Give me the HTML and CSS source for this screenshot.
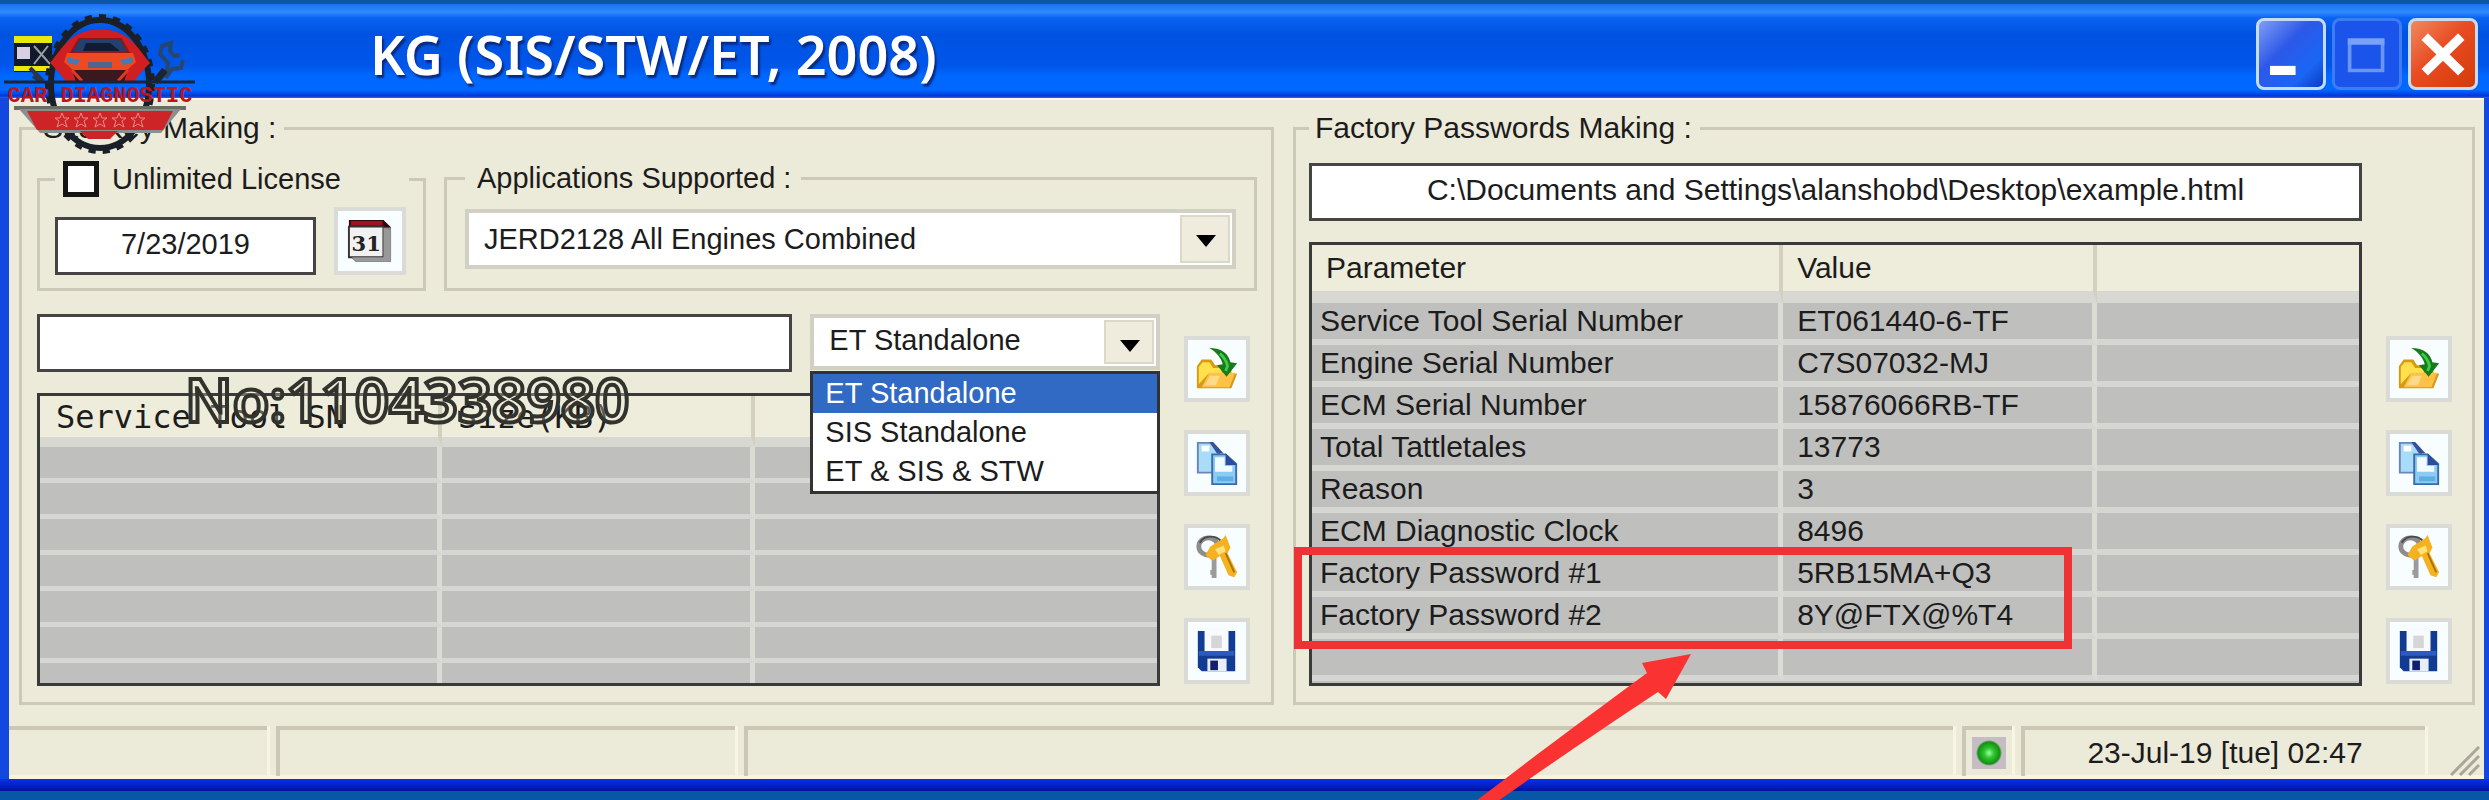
FILE: index.html
```html
<!doctype html>
<html lang="en">
<head>
	<meta charset="utf-8">
	<title>KG (SIS/STW/ET, 2008)</title>
	<link rel="stylesheet" href="styles.css">
</head>
<body>
	<!-- shared icons for the two tool columns -->
	<svg class="sprite" width="0" height="0" aria-hidden="true">
		<symbol id="i-open" viewBox="0 0 48 48">
			<path d="M3 44V21l5-7h10l4 6h8l9 3v5l6 1-6 15z" fill="#d99a12"/>
			<path d="M5 40V22l4-5h7l4 6h9v6H15z" fill="#ffe14d"/>
			<path d="M8 43l8-15h27l-6 15z" fill="#ffc247"/>
			<path d="M11 41l6-10h10l-4 10z" fill="#ffd98a"/>
			<path d="M16 2c13 0 20 6 22 15l7 1-11 14-10-12 6-1C28 12 24 7 16 2z" fill="#177a1c"/>
			<path d="M27 8c5 4 7 8 8 13l-2 5" fill="none" stroke="#3ecb45" stroke-width="3"/>
		</symbol>
		<symbol id="i-copy" viewBox="0 0 48 48">
			<path d="M4 3h13l9 9v22H4z" fill="#a9dcf8" stroke="#6a86b5" stroke-width="2"/>
			<path d="M8 6h8v6h-8z" fill="#fff"/>
			<path d="M16 2h4l11 12h-7z" fill="#34529c"/>
			<path d="M19 15h14l11 10v21H19z" fill="#8ccbf2" stroke="#3a6cab" stroke-width="2"/>
			<path d="M22 18h10v9h8v6H22z" fill="#f2fbff"/>
			<path d="M33 14l12 12H33z" fill="#2d4b9c"/>
			<path d="M24 38h17v5H24z" fill="#5faee6"/>
		</symbol>
		<symbol id="i-keys" viewBox="0 0 48 48">
			<ellipse cx="15" cy="13" rx="10" ry="9" fill="none" stroke="#8d8d8d" stroke-width="5"/>
			<path d="M6 9c5-8 16-8 22-2" fill="none" stroke="#4a4a4a" stroke-width="2"/>
			<path d="M21 24v22M17 40h4" stroke="#9b9b9b" stroke-width="5" fill="none"/>
			<path d="M17 13l13-8 3-4 5 13-3 6 10 20-3 5-6-2-9-20-8 5-7-6z" fill="#f5b120"/>
			<path d="M22 16l9-4 2 6-7 4z" fill="#ffe27c"/>
			<path d="M33 20l9 20" stroke="#a87408" stroke-width="2"/>
		</symbol>
		<symbol id="i-save" viewBox="0 0 48 48">
			<path d="M4 3h39v42H8l-4-4z" fill="#123c94"/>
			<path d="M11 0h25v24H11z" fill="#f7fbff"/>
			<path d="M18 8h11v13H18z" fill="#d6d6d6"/>
			<path d="M14 32h20v13H14z" fill="#e9eefb"/>
			<path d="M17 34h8v10h-8z" fill="#10206e"/>
			<path d="M5 24h37v5H5z" fill="#2a5cc0"/>
		</symbol>
	</svg>

	<main class="window">
		<!-- title bar -->
		<header class="titlebar">
			<svg class="app-icon" viewBox="0 0 38 36" aria-hidden="true">
				<path d="M0 0h38v36H0z" fill="#111a2c"/>
				<path d="M0 0h38v7H0zM0 30h38v5H0z" fill="#e8e90c"/>
				<path d="M3 11h13v12H3z" fill="#d9cfe4"/>
				<path d="M20 10l16 18M34 10L20 28" stroke="#9aa0a0" stroke-width="2"/>
			</svg>
			<svg class="logo" viewBox="0 0 200 160" role="img" aria-label="Car Diagnostic">
				<ellipse cx="100" cy="84" rx="49" ry="64" fill="none" stroke="#1b1f27" stroke-width="6"/>
				<ellipse cx="100" cy="84" rx="52" ry="67" fill="none" stroke="#1b1f27" stroke-width="6" stroke-dasharray="7 7"/>
				<path d="M50 63c12-14 20-33 50-34 30 1 38 20 50 34-8 8-12 13-16 19H66c-4-6-8-11-16-19z" fill="#cf1f22"/>
				<path d="M71 53l8-14h42l8 14z" fill="#23406f" stroke="#8e1717" stroke-width="2"/>
				<path d="M83 51l3-8h24l10 8z" fill="#101b36"/>
				<path d="M67 53h66l3 9-9 8H73l-9-8z" fill="#ee4a22"/>
				<path d="M67 57l13 3-3 5-9-2zM133 57l-13 3 3 5 9-2z" fill="#4a78b5"/>
				<path d="M88 62h24v6H88z" fill="#51658d"/>
				<path d="M72 70h56l-4 12H76z" fill="#3b1820"/>
				<path d="M72 70l10 11M128 70l-10 11" stroke="#e23a22" stroke-width="3"/>
				<path d="M30 68l13 13M33 76l8 6" stroke="#27364d" stroke-width="4"/>
				<path d="M160 79c6-5 8-9 8-16l-8-9 2-8 9-3-1 8 4 5 6-1M166 78l6-9 9-1 2-8" fill="none" stroke="#27466f" stroke-width="4"/>
				<path d="M155 82l10-12" stroke="#1b2430" stroke-width="7"/>
				<path d="M4 82h191" stroke="#16243c" stroke-width="3"/>
				<path d="M14 108h172" stroke="#6b6b66" stroke-width="4"/>
				<path d="M19 109h162l-20 24H40z" fill="#8b8f8c"/>
				<path d="M27 111h146l-10 19H37z" fill="#cd2428"/>
				<path d="M80 131h38l-8 8H88z" fill="#cd2428"/>
				<g fill="none" stroke="#ee8a86" stroke-width="1">
					<path id="star" d="M62 113l2 5h5l-4 3 2 6-5-3-5 3 2-6-4-3h5z"/>
					<use href="#star" x="19"/>
					<use href="#star" x="38"/>
					<use href="#star" x="57"/>
					<use href="#star" x="76"/>
				</g>
				<text x="100" y="102" text-anchor="middle" class="logo-text">CAR DIAGNOSTIC</text>
			</svg>
			<h1>KG (SIS/STW/ET, 2008)</h1>
			<div class="controls">
				<button type="button" class="ctl ctl-min" aria-label="Minimize">
					<svg viewBox="0 0 70 70"><path d="M12 48h28v10H12z" fill="#fff"/></svg>
				</button>
				<button type="button" class="ctl ctl-max" aria-label="Maximize" disabled>
					<svg viewBox="0 0 70 70"><path d="M16 20h36v33H16z" fill="none" stroke="#6b94f5" stroke-width="4"/><path d="M14 18h40v7H14z" fill="#7ba1f7"/></svg>
				</button>
				<button type="button" class="ctl ctl-close" aria-label="Close">
					<svg viewBox="0 0 70 70"><path d="M15 16l40 39M55 16L15 55" stroke="#fff" stroke-width="10"/></svg>
				</button>
			</div>
		</header>

		<div class="client">
			<!-- key making -->
			<fieldset class="group group-keys">
				<legend>Site Key Making :</legend>
				<div class="options">
					<fieldset class="group box-license">
						<legend>
							<input type="checkbox" id="unlimited">
							<label for="unlimited">Unlimited License</label>
						</legend>
						<input type="text" class="field date" value="7/23/2019" aria-label="Expiry date">
						<button type="button" class="tool tool-cal" aria-label="Calendar">
							<svg viewBox="0 0 48 48">
								<path d="M2 2h36l8 8v36H9l-7-7z" fill="#8a8a8a"/>
								<path d="M2 2h36l8 8H2z" fill="#30090f"/>
								<path d="M4 3h33v5H4z" fill="#a30f22"/>
								<path d="M2 9h36v32H2z" fill="#f1f1f1" stroke="#333" stroke-width="2"/>
								<path d="M38 10l7 3v32H10l-5-4h33z" fill="#999"/>
								<text x="20" y="34" text-anchor="middle" class="cal-text">31</text>
							</svg>
						</button>
					</fieldset>
					<fieldset class="group box-apps">
						<legend><label for="apps">Applications Supported :</label></legend>
						<div class="combo">
							<select id="apps"><option>JERD2128 All Engines Combined</option></select>
						</div>
					</fieldset>
				</div>
				<div class="work">
					<div class="work-main">
						<div class="query">
							<input type="text" class="field" aria-label="Service tool serial number">
							<div class="combo combo-open">
								<select aria-label="Application type">
									<option>ET Standalone</option>
									<option>SIS Standalone</option>
									<option>ET &amp; SIS &amp; STW</option>
								</select>
								<ul class="dropdown" role="listbox">
									<li class="current" role="option" aria-selected="true">ET Standalone</li>
									<li role="option">SIS Standalone</li>
									<li role="option">ET &amp; SIS &amp; STW</li>
								</ul>
							</div>
						</div>
						<div class="grid-holder">
							<div class="grid-box">
								<table class="grid grid-files">
									<thead>
										<tr><th>Service Tool SN</th><th>Size(KB)</th><th></th></tr>
									</thead>
									<tbody>
										<tr><td></td><td></td><td></td></tr>
										<tr><td></td><td></td><td></td></tr>
										<tr><td></td><td></td><td></td></tr>
										<tr><td></td><td></td><td></td></tr>
										<tr><td></td><td></td><td></td></tr>
										<tr><td></td><td></td><td></td></tr>
										<tr class="rest"><td></td><td></td><td></td></tr>
									</tbody>
								</table>
							</div>
							<span class="watermark">No:1104338980</span>
						</div>
					</div>
					<div class="tools">
						<button type="button" class="tool" aria-label="Open"><svg><use href="#i-open"/></svg></button>
						<button type="button" class="tool" aria-label="Copy"><svg><use href="#i-copy"/></svg></button>
						<button type="button" class="tool" aria-label="Make key"><svg><use href="#i-keys"/></svg></button>
						<button type="button" class="tool" aria-label="Save"><svg><use href="#i-save"/></svg></button>
					</div>
				</div>
			</fieldset>

			<!-- factory passwords -->
			<fieldset class="group group-pass">
				<legend>Factory Passwords Making :</legend>
				<div class="work">
					<div class="work-main">
						<input type="text" class="field path" value="C:\Documents and Settings\alanshobd\Desktop\example.html" aria-label="File path">
						<div class="grid-holder">
							<div class="grid-box">
								<table class="grid grid-params">
									<thead>
										<tr><th>Parameter</th><th>Value</th><th></th></tr>
									</thead>
									<tbody>
										<tr><td>Service Tool Serial Number</td><td>ET061440-6-TF</td><td></td></tr>
										<tr><td>Engine Serial Number</td><td>C7S07032-MJ</td><td></td></tr>
										<tr><td>ECM Serial Number</td><td>15876066RB-TF</td><td></td></tr>
										<tr><td>Total Tattletales</td><td>13773</td><td></td></tr>
										<tr><td>Reason</td><td>3</td><td></td></tr>
										<tr><td>ECM Diagnostic Clock</td><td>8496</td><td></td></tr>
										<tr><td>Factory Password #1</td><td>5RB15MA+Q3</td><td></td></tr>
										<tr><td>Factory Password #2</td><td>8Y@FTX@%T4</td><td></td></tr>
										<tr><td></td><td></td><td></td></tr>
									</tbody>
								</table>
							</div>
							<!-- highlight and arrow over the password rows -->
							<div class="mark"></div>
							<svg class="arrow" viewBox="0 0 216 147" aria-hidden="true">
								<path d="M215 0l-49 9 5 10C110 64 56 104 0 147h22c54-38 104-72 160-109l8 7z" fill="#fb3232"/>
							</svg>
						</div>
					</div>
					<div class="tools">
						<button type="button" class="tool" aria-label="Open file"><svg><use href="#i-open"/></svg></button>
						<button type="button" class="tool" aria-label="Copy passwords"><svg><use href="#i-copy"/></svg></button>
						<button type="button" class="tool" aria-label="Make passwords"><svg><use href="#i-keys"/></svg></button>
						<button type="button" class="tool" aria-label="Save passwords"><svg><use href="#i-save"/></svg></button>
					</div>
				</div>
			</fieldset>
		</div>

		<!-- status bar -->
		<footer class="status">
			<span></span>
			<span></span>
			<span></span>
			<span class="led"><i></i></span>
			<span class="clock">23-Jul-19 [tue] 02:47</span>
			<svg class="grip" viewBox="0 0 30 32" aria-hidden="true">
				<path d="M1 31L29 3M10 31l19-19M19 31l10-10" stroke="#aaa698" stroke-width="3"/>
			</svg>
		</footer>
	</main>
</body>
</html>
```

FILE: styles.css
```css
*{box-sizing:border-box;}
body{
	margin:0;
	background-color:#0856a6;
	color:#1c1c1c;
	font-family:"Liberation Sans",Arial,sans-serif;
	font-size:30px;
	line-height:34px;
}
input,select,button{
	margin:0;
	font-family:inherit;
	font-size:inherit;
	color:inherit;
}
.sprite{position:absolute;}
/* window frame */
.window{
	min-height:100vh;
	display:flex;
	flex-direction:column;
	padding:4px 5px 23px 9px;
	background:
		linear-gradient(#0b57a4,#0b57a4) top/100% 4px no-repeat,
		linear-gradient(#0a2ff0,#0013a0) bottom 11px left 0/100% 12px no-repeat,
		linear-gradient(#0856a6,#0856a6) bottom/100% 11px no-repeat,
		#1247e0;
}
/* title bar */
.titlebar{
	position:relative;
	height:94px;
	margin:0 -5px 0 -9px;
	padding:6px 11px 0 14px;
	display:flex;
	align-items:center;
	background:linear-gradient(#1a70ee 0,#2f8cff 8px,#0a62f2 14px,#0053e0 30px,#0056ea 62px,#0068ff 72px,#0068ff 86px,#0035d8 92px,#3a62d0 94px);
}
.titlebar h1{
	flex:1;
	margin:0 0 0 318px;
	color:#fff;
	font-family:"Noto Sans","Open Sans",sans-serif;
	font-size:54px;
	font-weight:600;
	line-height:60px;
	text-shadow:2px 3px 2px #0a2a80;
}
.app-icon{width:38px;height:36px;}
.logo{
	position:absolute;
	z-index:2;
	left:0;
	top:-4px;
	width:200px;
	height:160px;
}
.logo-text{
	font-family:"Liberation Mono",monospace;
	font-size:22px;
	font-weight:bold;
	fill:#b81722;
}
.controls{display:flex;gap:6px;}
.ctl{
	width:70px;
	height:72px;
	padding:0;
	border:3px solid #c6dcf5;
	border-radius:8px;
}
.ctl svg{display:block;width:100%;height:100%;}
.ctl-min{background:linear-gradient(135deg,#7f9df5,#2d58e8 40%,#1a66f5 75%,#0b3cc0);}
.ctl-max{background-color:#1a54ea;border-color:#3d7cf5;}
.ctl-close{background:linear-gradient(135deg,#f08a60,#e84c22 45%,#d43a08);}
/* client area */
.client{
	flex:1;
	display:grid;
	grid-template-columns:1255fr 1182fr;
	gap:19px;
	padding:11px 9px 21px 10px;
	background-color:#ecead9;
	border-top:2px solid #fbf8e4;
}
.group{
	min-width:0;
	margin:0;
	border:3px solid #cdc9b8;
}
.group-keys,.group-pass{
	display:flex;
	flex-direction:column;
}
.group-keys{padding:16px 14px 16px 15px;}
.group-pass{padding:18px 20px 16px 13px;}
.group legend{padding:0 8px 0 6px;}
.options{
	display:grid;
	grid-template-columns:389fr 813fr;
	gap:18px;
	margin-bottom:23px;
}
.options .group{height:130px;font-size:29px;}
.box-license{
	display:flex;
	align-items:flex-end;
	gap:18px;
	padding:9px 17px 13px 15px;
}
.box-license legend{
	display:flex;
	align-items:center;
	gap:13px;
	width:354px;
	padding:0 8px;
}
.box-license input[type=checkbox]{
	appearance:none;
	width:36px;
	height:36px;
	border:5px solid #151515;
	background-color:#fff;
}
.box-apps{padding:14px 18px 13px;}
.box-apps legend{padding:0 10px 0 12px;}
/* text fields */
.field{
	min-width:0;
	height:58px;
	padding:0 10px 4px;
	border:3px solid #444;
	background-color:#fff;
}
.date{flex:1;text-align:center;}
.path{width:100%;text-align:center;}
/* combo boxes */
.combo{position:relative;}
.combo select{
	appearance:none;
	display:block;
	width:100%;
	height:60px;
	padding:0 60px 0 15px;
	border:4px solid #d2cfc3;
	border-radius:0;
	background-color:#fff;
}
.combo:before{
	content:"";
	position:absolute;
	top:6px;
	bottom:6px;
	right:6px;
	width:46px;
	border:2px solid #dcd8c8;
	background-color:#efecdd;
}
.combo:after{
	content:"";
	position:absolute;
	right:20px;
	top:26px;
	border:10px solid transparent;
	border-top:12px solid #000;
	border-bottom:0;
}
.combo-open{font-size:29px;}
.combo-open select{height:56px;padding-bottom:4px;}
.dropdown{
	position:absolute;
	z-index:1;
	left:0;
	right:0;
	top:57px;
	margin:0;
	padding:0;
	list-style:none;
	border:3px solid #333;
	background-color:#fff;
	line-height:39px;
}
.dropdown li{padding:0 12px;}
.dropdown .current{background-color:#316ac5;color:#fff;}
/* table and tool column */
.work{flex:1;display:flex;gap:24px;}
.work-main{
	flex:1;
	min-width:0;
	display:flex;
	flex-direction:column;
	gap:21px;
}
.group-keys .tools{margin-right:7px;}
.query{
	display:grid;
	grid-template-columns:756fr 350fr;
	align-items:start;
	gap:18px;
}
.tools{
	display:flex;
	flex-direction:column;
	justify-content:flex-end;
	gap:28px;
	padding-bottom:2px;
}
.tool{
	display:flex;
	align-items:center;
	justify-content:center;
	width:66px;
	height:66px;
	padding:0;
	border:4px solid #dadad6;
	background-color:#f8fdff;
}
.tool svg{width:46px;height:48px;}
.tool-cal{width:72px;height:68px;}
.cal-text{
	font-family:"DejaVu Serif",serif;
	font-size:22px;
	font-weight:bold;
	fill:#222;
}
.grid-holder{
	position:relative;
	flex:1;
	display:flex;
}
.grid-box{
	flex:1;
	overflow:hidden;
	border:3px solid #3a3a3a;
	background-color:#bfbfbe;
}
.grid{
	width:100%;
	table-layout:fixed;
	border-collapse:separate;
	border-spacing:0;
}
.grid th{
	padding:0 14px;
	border-right:4px solid #d3d0c0;
	border-bottom:12px solid #d8d8d3;
	background-color:#eeecdb;
	font-weight:normal;
	text-align:left;
}
.grid td{
	padding:0 8px;
	border-right:5px solid #dcdcd6;
	border-bottom:6px solid #d6d6d3;
}
.grid th:last-child,.grid td:last-child{border-right:0;}
.grid-params th{height:58px;}
.grid-params td{height:42px;}
.grid-params th:first-child{width:45%;}
.grid-params th:nth-child(2){width:30%;}
.grid-params td:nth-child(2),.grid-params th:nth-child(2){padding-left:14px;}
.grid-files th{
	height:51px;
	padding:0 16px;
	border-bottom-width:10px;
	font-family:"DejaVu Sans Mono",monospace;
	font-size:32px;
}
.grid-files td{height:36px;border-bottom-width:5px;}
.grid-files .rest td{height:20px;border-bottom:0;}
.grid-files th:first-child{width:36%;}
.grid-files th:nth-child(2){width:28%;}
/* overlays on the tables */
.watermark{
	position:absolute;
	left:148px;
	top:-24px;
	font-family:"Noto Sans","Open Sans",sans-serif;
	font-size:60px;
	font-weight:600;
	line-height:60px;
	color:rgba(240,238,220,0.3);
	-webkit-text-stroke:4px #33332e;
	white-space:nowrap;
}
.mark{
	position:absolute;
	left:-15px;
	right:290px;
	top:305px;
	height:102px;
	border:8px solid #ef3236;
}
.arrow{
	position:absolute;
	z-index:3;
	left:167px;
	top:412px;
	width:216px;
	height:147px;
}
/* status bar */
.status{
	display:grid;
	grid-template-columns:258fr 459fr 1210fr 50px 404px 50px;
	gap:9px;
	height:53px;
	background-color:#ecead9;
	border-bottom:4px solid #fbf3dc;
}
.status span{
	border-top:4px solid #cbc7b4;
	border-left:4px solid #cbc7b4;
	box-shadow:3px 0 0 #f8f5e4;
}
.status span:first-child{border-left:0;}
.status .led{
	display:flex;
	align-items:center;
	justify-content:center;
}
.led i{
	width:34px;
	height:32px;
	background:radial-gradient(circle at 50% 50%,#9f9 0,#2fc52f 5px,#139013 11px,#c6bcc4 13px);
}
.status .clock{
	text-align:center;
	line-height:46px;
}
.grip{
	align-self:end;
	justify-self:end;
	width:30px;
	height:32px;
	margin-right:4px;
}
```
